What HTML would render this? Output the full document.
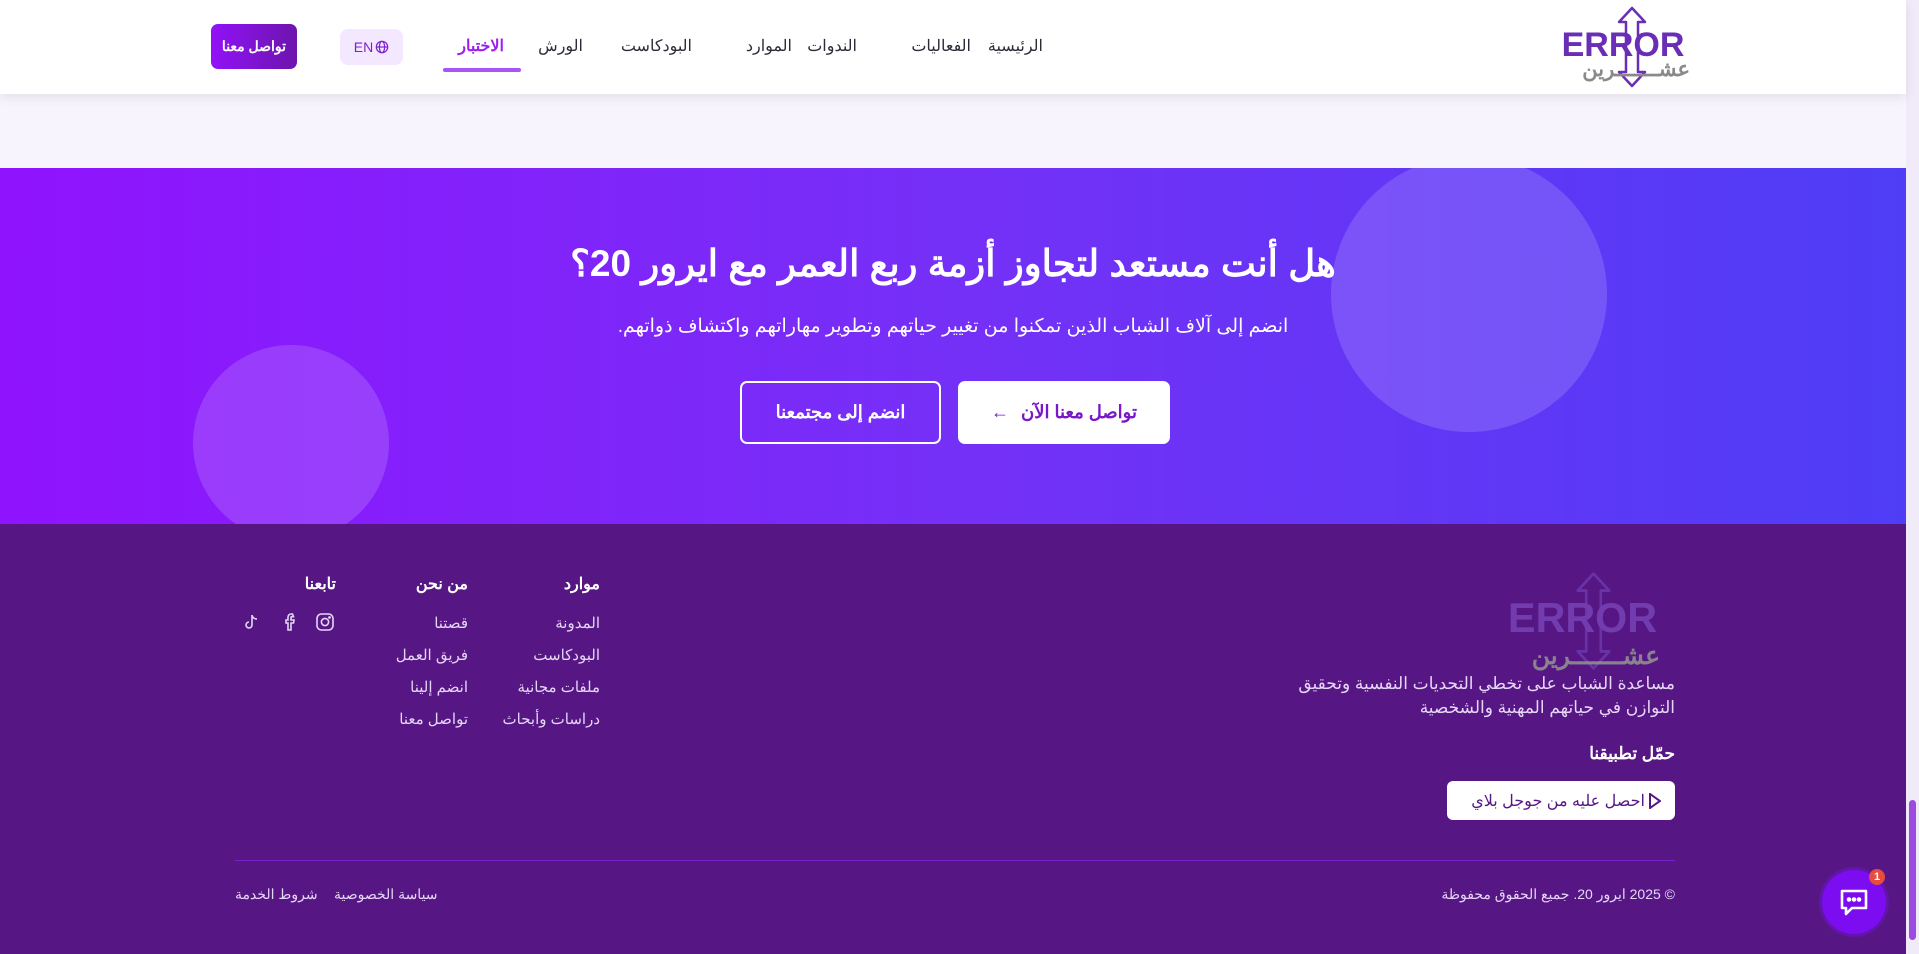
<!DOCTYPE html>
<html dir="rtl" lang="ar"><head><meta charset="utf-8">
<style>
*{margin:0;padding:0;box-sizing:border-box}
body{width:1919px;height:954px;overflow:hidden;font-family:"Liberation Sans","Noto Sans CJK SC",sans-serif;background:#f8f4fd;position:relative}
.abs{position:absolute}
header{position:absolute;left:0;top:0;width:1906px;height:94px;background:#fff;box-shadow:0 4px 10px rgba(0,0,0,.08);z-index:2}
.nav{position:absolute;top:36px;font-size:16px;color:#2d2d3a;white-space:nowrap}
.cta{position:absolute;left:0;top:168px;width:1906px;height:356px;background:linear-gradient(90deg,#9013fe,#7530f7 50%,#4f3df6);overflow:hidden}
.circ{position:absolute;border-radius:50%;background:rgba(255,255,255,.15)}
footer{position:absolute;left:0;top:524px;width:1906px;height:430px;background:#561785;color:#eadcf8}
.ft{position:absolute;font-size:15px;color:#e6d6f6;white-space:nowrap}
.fh{position:absolute;font-size:16px;font-weight:bold;color:#fff;white-space:nowrap}
.sb{position:absolute;left:1906px;top:0;width:13px;height:954px;background:#f1eaf9}
.ar{position:absolute;font-weight:bold;white-space:nowrap;direction:rtl}
</style></head><body>
<header>
  <svg class="abs" style="left:1555px;top:6px" width="140" height="82" viewBox="0 0 140 82">
    <path d="M77 2 L64 16 L71 16 L71 66 L64 66 L77 80 L90 66 L83 66 L83 16 L90 16 Z" fill="none" stroke="#6a2db5" stroke-width="2.5" stroke-linejoin="round"/>
    <text x="68" y="50" text-anchor="middle" font-family="Liberation Sans" font-weight="bold" font-size="34" fill="#6a2db5">ERROR</text>
  </svg>
  <div class="ar" style="right:216px;top:58px;font-size:21px;line-height:24px;color:#8a8a8a">عشـــــــرين</div>
  <div class="nav" style="right:863px">الرئيسية</div>
  <div class="nav" style="right:935px">الفعاليات</div>
  <div class="nav" style="right:1049px">الندوات</div>
  <div class="nav" style="right:1114px">الموارد</div>
  <div class="nav" style="right:1214px">البودكاست</div>
  <div class="nav" style="right:1323px">الورش</div>
  <div class="nav" style="right:1402px;color:#9b1ff0;font-weight:bold">الاختبار</div>
  <div class="abs" style="left:443px;top:68px;width:78px;height:4px;border-radius:2px;background:#a855f7"></div>
  <div class="abs" style="left:340px;top:29px;width:63px;height:36px;border-radius:8px;background:#f3e8ff;color:#7e22ce;font-size:14px;display:flex;align-items:center;justify-content:center;gap:2px;direction:ltr">EN<svg width="14" height="14" viewBox="0 0 16 16" fill="none" stroke="#7e22ce" stroke-width="1.4"><circle cx="8" cy="8" r="6.5"/><ellipse cx="8" cy="8" rx="3" ry="6.5"/><path d="M1.5 8h13"/></svg></div>
  <div class="abs" style="left:211px;top:24px;width:86px;height:45px;border-radius:7px;background:linear-gradient(90deg,#9212f8,#6c14ad);color:#fff;font-size:14px;font-weight:bold;display:flex;align-items:center;justify-content:center">تواصل معنا</div>
</header>

<div class="cta">
  <div class="circ" style="left:1331px;top:-12px;width:276px;height:276px"></div>
  <div class="circ" style="left:193px;top:177px;width:196px;height:196px"></div>
  <div class="abs" style="left:0;width:1906px;top:74px;text-align:center;color:#fff;font-size:37px;font-weight:bold">هل أنت مستعد لتجاوز أزمة ربع العمر مع ايرور 20؟</div>
  <div class="abs" style="left:0;width:1906px;top:147px;text-align:center;color:#fff;font-size:19px">انضم إلى آلاف الشباب الذين تمكنوا من تغيير حياتهم وتطوير مهاراتهم واكتشاف ذواتهم.</div>
  <div class="abs" style="left:958px;top:213px;width:212px;height:63px;border-radius:7px;background:#fff;color:#7a17c9;font-size:18px;font-weight:bold;display:flex;align-items:center;justify-content:center;gap:12px">تواصل معنا الآن <span style="font-weight:normal">&#8592;</span></div>
  <div class="abs" style="left:740px;top:213px;width:201px;height:63px;border-radius:7px;border:2px solid #fff;color:#fff;font-size:18px;font-weight:bold;display:flex;align-items:center;justify-content:center">انضم إلى مجتمعنا</div>
</div>

<footer>
  <svg class="abs" style="left:1500px;top:46px;opacity:.55" width="170" height="102" viewBox="0 0 140 82">
    <path d="M77 2 L64 16 L71 16 L71 66 L64 66 L77 80 L90 66 L83 66 L83 16 L90 16 Z" fill="none" stroke="#7a4bc0" stroke-width="2.2" stroke-linejoin="round"/>
    <text x="68" y="50" text-anchor="middle" font-family="Liberation Sans" font-weight="bold" font-size="34" fill="#8a5ad0">ERROR</text>
  </svg>
  <div class="ar" style="right:246px;top:118px;font-size:25px;line-height:28px;color:#8f8f8f;opacity:.9">عشـــــــرين</div>
  <div class="ft" style="right:231px;top:148px;font-size:17px;line-height:24px;text-align:right">مساعدة الشباب على تخطي التحديات النفسية وتحقيق<br>التوازن في حياتهم المهنية والشخصية</div>
  <div class="fh" style="right:231px;top:220px;font-size:17px">حمّل تطبيقنا</div>
  <div class="abs" style="left:1447px;top:257px;width:228px;height:39px;border-radius:6px;background:#fff;color:#561785;font-size:16px;display:flex;align-items:center;padding-right:14px;gap:4px"><svg width="12" height="16" viewBox="0 0 12 16"><path d="M1 1 L11 8 L1 15 Z" fill="none" stroke="#561785" stroke-width="2"/><path d="M1 1v14" stroke="#561785" stroke-width="2"/></svg>احصل عليه من جوجل بلاي</div>

  <div class="fh" style="right:1306px;top:50px">موارد</div>
  <div class="ft" style="right:1306px;top:90px">المدونة</div>
  <div class="ft" style="right:1306px;top:122px">البودكاست</div>
  <div class="ft" style="right:1306px;top:154px">ملفات مجانية</div>
  <div class="ft" style="right:1306px;top:186px">دراسات وأبحاث</div>
  <div class="fh" style="right:1438px;top:50px">من نحن</div>
  <div class="ft" style="right:1438px;top:90px">قصتنا</div>
  <div class="ft" style="right:1438px;top:122px">فريق العمل</div>
  <div class="ft" style="right:1438px;top:154px">انضم إلينا</div>
  <div class="ft" style="right:1438px;top:186px">تواصل معنا</div>
  <div class="fh" style="right:1570px;top:50px">تابعنا</div>
  <svg class="abs" style="left:316px;top:89px" width="18" height="18" viewBox="0 0 18 18" fill="none" stroke="#e6d6f6" stroke-width="1.6"><rect x="1" y="1" width="16" height="16" rx="4.5"/><circle cx="9" cy="9" r="3.6"/><circle cx="13.5" cy="4.5" r=".6" fill="#e6d6f6"/></svg>
  <svg class="abs" style="left:283px;top:89px" width="14" height="18" viewBox="0 0 14 18" fill="none" stroke="#e6d6f6" stroke-width="1.6"><path d="M9.5 1H8a3 3 0 0 0-3 3v3H3v3h2v7h3v-7h2.5l.5-3H8V4.5a.8.8 0 0 1 .8-.8h1.7z"/></svg>
  <svg class="abs" style="left:245px;top:90px" width="14" height="16" viewBox="0 0 14 16" fill="none" stroke="#e6d6f6" stroke-width="1.6"><path d="M7 1v10a3 3 0 1 1-3-3M7 1c.5 2.5 2.5 4 5 4"/></svg>

  <div class="abs" style="left:235px;top:336px;width:1440px;height:1px;background:#7a1fc9"></div>
  <div class="ft" style="right:231px;top:362px;font-size:14px">© 2025 ايرور 20. جميع الحقوق محفوظة</div>
  <div class="ft" style="left:235px;top:362px;font-size:14px">شروط الخدمة</div>
  <div class="ft" style="left:334px;top:362px;font-size:14px">سياسة الخصوصية</div>

  <div class="abs" style="left:1822px;top:346px;width:64px;height:64px;border-radius:50%;background:#7c0df0;box-shadow:0 0 0 3px rgba(124,13,240,.35)"></div>
  <svg class="abs" style="left:1838px;top:364px" width="32" height="30" viewBox="0 0 32 30" fill="none" stroke="#fff" stroke-width="2.6"><path d="M4 3h24v17H14l-6 6v-6H4z" stroke-linejoin="round"/><circle cx="11" cy="11.5" r="1" fill="#fff"/><circle cx="16" cy="11.5" r="1" fill="#fff"/><circle cx="21" cy="11.5" r="1" fill="#fff"/></svg>
  <div class="abs" style="left:1869px;top:345px;width:16px;height:16px;border-radius:50%;background:#e74c3c;color:#fff;font-size:11px;font-weight:bold;text-align:center;line-height:16px">1</div>
</footer>
<div class="sb"><div class="abs" style="left:3px;top:800px;width:7px;height:140px;border-radius:4px;background:#9b4be0"></div></div>
</body></html>
